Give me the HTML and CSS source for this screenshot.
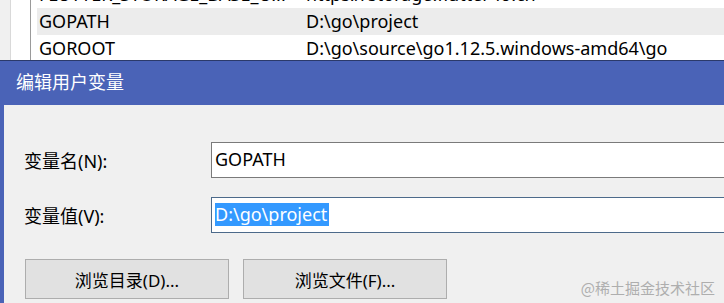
FILE: index.html
```html
<!DOCTYPE html>
<html lang="zh-CN">

<head>
    <meta charset="UTF-8">
    <meta name="viewport" content="width=device-width, initial-scale=1.0">
    <title>编辑用户变量</title>
    <link rel="stylesheet" href="styles.css">
</head>

<body>
    <!-- environment variable list behind the dialog -->
    <div class="var-list">
        <div class="gutter"></div>
        <div class="rows">
            <div class="row">
                <span class="name">FLUTTER_STORAGE_BASE_U...</span>
                <span class="value">https://storage.flutter-io.cn</span>
            </div>
            <div class="row selected">
                <span class="name">GOPATH</span>
                <span class="value">D:\go\project</span>
            </div>
            <div class="row">
                <span class="name">GOROOT</span>
                <span class="value">D:\go\source\go1.12.5.windows-amd64\go</span>
            </div>
        </div>
    </div>

    <div class="dialog">
        <div class="title-bar">编辑用户变量</div>
        <div class="dialog-body">
            <div class="fields">
                <label class="field-label">变量名(N):</label>
                <div class="text-input">GOPATH</div>
                <label class="field-label">变量值(V):</label>
                <div class="text-input focused"><span class="selection">D:\go\project</span></div>
            </div>
            <div class="buttons">
                <button class="btn">浏览目录(D)...</button>
                <button class="btn">浏览文件(F)...</button>
            </div>
            <div class="watermark">@稀土掘金技术社区</div>
        </div>
    </div>
</body>

</html>
```

FILE: styles.css
```css
body {
    margin: 0;
    padding: 0;
    width: 724px;
    height: 303px;
    overflow: hidden;
    font-family: "Noto Sans", "Noto Sans CJK SC", sans-serif;
    background-color: #f0f0f0;
    color: #000;
}

/* list behind the dialog */
.var-list {
    display: flex;
    height: 60px;
    background-color: #f0f0f0;
    padding-left: 10px;
}

.gutter {
    width: 19px;
    background-color: #fff;
    border-left: 1px solid #d9d9d9;
    border-right: 1px solid #9a9a9a;
}

.rows {
    flex: 1;
    display: flex;
    flex-direction: column;
    justify-content: flex-end;
    overflow: hidden;
    background-color: #fff;
    padding-left: 6px;
}

.row {
    display: flex;
    flex-shrink: 0;
    height: 27px;
    line-height: 27px;
    font-size: 18px;
    white-space: nowrap;
}

.row:last-child {
    height: 25px;
}

.row.selected {
    background-color: #ececec;
}

.row .name {
    width: 267px;
    padding-left: 2px;
    flex-shrink: 0;
}

.row .value {
    flex-shrink: 0;
}

/* dialog */
.dialog {
    border-top: 1px solid #2b3a6a;
}

.title-bar {
    height: 44px;
    line-height: 42px;
    background-color: #4a63b7;
    color: #fff;
    font-size: 18px;
    padding-left: 16px;
}

.dialog-body {
    position: relative;
    height: 198px;
    background-color: #f0f0f0;
    border-left: 4px solid #4a63b7;
    padding: 37px 0 0 20px;
    box-sizing: border-box;
}

.fields {
    display: grid;
    grid-template-columns: 187px 1fr;
    row-gap: 19px;
    align-items: center;
}

.field-label {
    font-size: 18px;
}

.text-input {
    height: 36px;
    box-sizing: border-box;
    border: 1px solid #7a7a7a;
    border-right: none;
    background-color: #fff;
    font-size: 18px;
    line-height: 33px;
    padding-left: 3px;
}

.text-input.focused {
    border-color: #4c6a8a;
}

.selection {
    background-color: #3399ff;
    color: #fff;
    display: inline-block;
    line-height: 23px;
    padding-right: 2px;
}

.buttons {
    display: flex;
    gap: 14px;
    margin-top: 26px;
    padding-left: 1px;
}

.btn {
    width: 204px;
    height: 40px;
    background-color: #e1e1e1;
    border: 1px solid #adadad;
    font-family: "Noto Sans", "Noto Sans CJK SC", sans-serif;
    font-size: 17px;
    color: #000;
    padding: 0;
}

.watermark {
    position: absolute;
    right: 9px;
    bottom: 5px;
    font-size: 15px;
    color: #aeaeae;
    font-family: "Noto Sans CJK SC", sans-serif;
}
```
